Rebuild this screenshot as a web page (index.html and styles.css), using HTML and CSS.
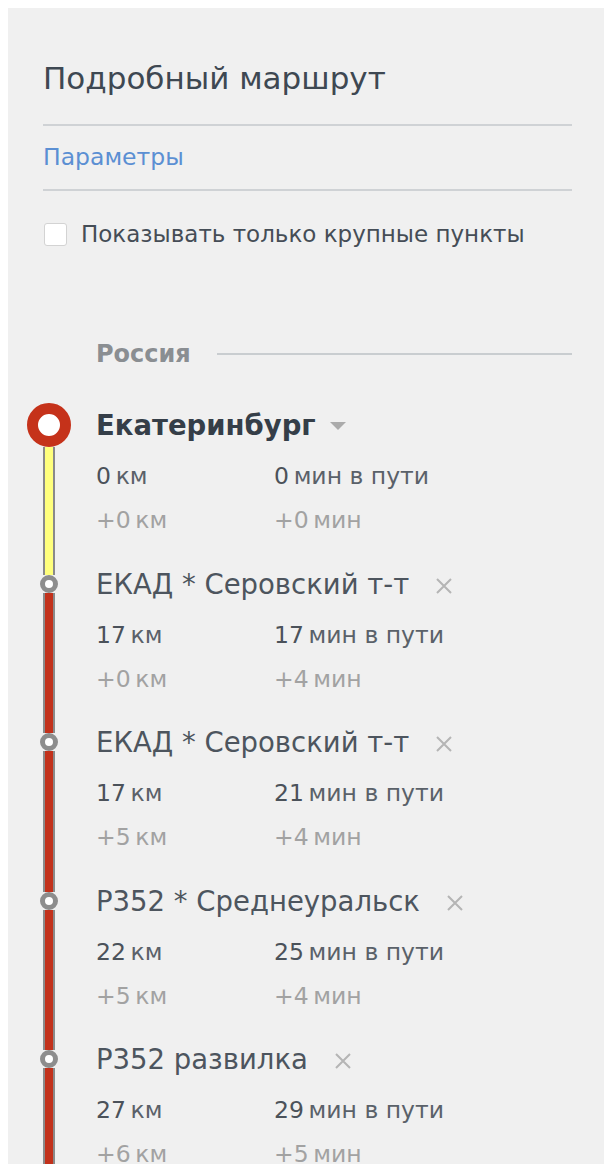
FILE: index.html
```html
<!DOCTYPE html>
<html lang="ru">
<head>
<meta charset="utf-8">
<title>Подробный маршрут</title>
<link rel="stylesheet" href="styles.css">
</head>
<body>
<main class="panel">
  <h1 class="panel-title">Подробный маршрут</h1>
  <div class="params"><a class="params-link" href="#">Параметры</a></div>
  <label class="option">
    <input type="checkbox" class="option-box">
    <span class="option-text">Показывать только крупные пункты</span>
  </label>

  <section class="route">
    <div class="country">
      <span class="country-name">Россия</span>
      <span class="country-rule"></span>
    </div>

    <ol class="stops">
      <li class="stop">
        <div class="rail">
          <span class="dot dot--start"></span>
          <span class="seg seg--yellow"></span>
        </div>
        <div class="stop-body">
          <div class="stop-head">
            <span class="stop-name stop-name--city">Екатеринбург</span>
            <span class="caret"></span>
          </div>
          <div class="stat-row">
            <span><span class="num">0</span>&thinsp;км</span>
            <span><span class="num">0</span>&thinsp;мин в пути</span>
          </div>
          <div class="stat-row stat-row--delta">
            <span>+0&thinsp;км</span>
            <span>+0&thinsp;мин</span>
          </div>
        </div>
      </li>

      <li class="stop">
        <div class="rail">
          <span class="stub seg--yellow"></span>
          <span class="dot"></span>
          <span class="seg seg--red"></span>
        </div>
        <div class="stop-body">
          <div class="stop-head">
            <span class="stop-name">ЕКАД * Серовский т-т</span>
            <button class="remove" type="button" aria-label="Удалить">
              <svg viewBox="0 0 20 20" width="20" height="20"><path d="M3 3 L17 17 M17 3 L3 17"/></svg>
            </button>
          </div>
          <div class="stat-row">
            <span><span class="num">17</span>&thinsp;км</span>
            <span><span class="num">17</span>&thinsp;мин в пути</span>
          </div>
          <div class="stat-row stat-row--delta">
            <span>+0&thinsp;км</span>
            <span>+4&thinsp;мин</span>
          </div>
        </div>
      </li>

      <li class="stop">
        <div class="rail">
          <span class="stub seg--red"></span>
          <span class="dot"></span>
          <span class="seg seg--red"></span>
        </div>
        <div class="stop-body">
          <div class="stop-head">
            <span class="stop-name">ЕКАД * Серовский т-т</span>
            <button class="remove" type="button" aria-label="Удалить">
              <svg viewBox="0 0 20 20" width="20" height="20"><path d="M3 3 L17 17 M17 3 L3 17"/></svg>
            </button>
          </div>
          <div class="stat-row">
            <span><span class="num">17</span>&thinsp;км</span>
            <span><span class="num">21</span>&thinsp;мин в пути</span>
          </div>
          <div class="stat-row stat-row--delta">
            <span>+5&thinsp;км</span>
            <span>+4&thinsp;мин</span>
          </div>
        </div>
      </li>

      <li class="stop">
        <div class="rail">
          <span class="stub seg--red"></span>
          <span class="dot"></span>
          <span class="seg seg--red"></span>
        </div>
        <div class="stop-body">
          <div class="stop-head">
            <span class="stop-name">Р352 * Среднеуральск</span>
            <button class="remove" type="button" aria-label="Удалить">
              <svg viewBox="0 0 20 20" width="20" height="20"><path d="M3 3 L17 17 M17 3 L3 17"/></svg>
            </button>
          </div>
          <div class="stat-row">
            <span><span class="num">22</span>&thinsp;км</span>
            <span><span class="num">25</span>&thinsp;мин в пути</span>
          </div>
          <div class="stat-row stat-row--delta">
            <span>+5&thinsp;км</span>
            <span>+4&thinsp;мин</span>
          </div>
        </div>
      </li>

      <li class="stop">
        <div class="rail">
          <span class="stub seg--red"></span>
          <span class="dot"></span>
          <span class="seg seg--red"></span>
        </div>
        <div class="stop-body">
          <div class="stop-head">
            <span class="stop-name">Р352 развилка</span>
            <button class="remove" type="button" aria-label="Удалить">
              <svg viewBox="0 0 20 20" width="20" height="20"><path d="M3 3 L17 17 M17 3 L3 17"/></svg>
            </button>
          </div>
          <div class="stat-row">
            <span><span class="num">27</span>&thinsp;км</span>
            <span><span class="num">29</span>&thinsp;мин в пути</span>
          </div>
          <div class="stat-row stat-row--delta">
            <span>+6&thinsp;км</span>
            <span>+5&thinsp;мин</span>
          </div>
        </div>
      </li>
    </ol>
  </section>
</main>
</body>
</html>
```

FILE: styles.css
```css
html,
body {
  margin: 0;
}

html {
  background: #ffffff;
  overflow: hidden;
}

body {
  padding: 8px 0 0 8px;
  font-family: "DejaVu Sans", Verdana, sans-serif;
}

/* Side panel */
.panel {
  box-sizing: border-box;
  min-height: 1156px;
  padding: 50px 32px 0 35px;
  background: #f0f0f0;
}

.panel-title {
  margin: 0;
  padding-bottom: 26px;
  border-bottom: 2px solid #cfd2d5;
  font-size: 31px;
  font-weight: normal;
  line-height: 40px;
  color: #3e4852;
}

.params {
  padding: 16px 0 17px;
  border-bottom: 2px solid #cfd2d5;
  font-size: 23.5px;
  line-height: 30px;
}

.params-link {
  color: #5b8fd3;
  text-decoration: none;
}

/* "Only major points" switch */
.option {
  display: flex;
  align-items: center;
  gap: 14px;
  height: 30px;
  margin-top: 28px;
  font-size: 23px;
  line-height: 30px;
  color: #454d56;
}

.option-box {
  appearance: none;
  box-sizing: border-box;
  width: 23px;
  height: 23px;
  margin: 0 0 0 1px;
  border: 1px solid #d3d3d3;
  border-radius: 3px;
  background: #ffffff;
}

/* Route timeline */
.route {
  margin-top: 90px;
}

.country {
  display: flex;
  align-items: center;
  gap: 26px;
  padding-left: 53px;
  line-height: 30px;
}

.country-name {
  font-size: 24px;
  font-weight: bold;
  color: #8a8e92;
}

.country-rule {
  flex: 1;
  height: 2px;
  background: #c9cdd0;
}

.stops {
  margin: 36px 0 0 -20px;
  padding: 0;
  list-style: none;
}

.stop {
  display: grid;
  grid-template-columns: 52px 1fr;
  column-gap: 21px;
}

.rail {
  display: flex;
  flex-direction: column;
  align-items: center;
}

.stub,
.seg {
  width: 8px;
  border-left: 2px solid #8a8a8a;
  border-right: 2px solid #8a8a8a;
}

.stub {
  height: 11px;
  flex: none;
}

.seg {
  flex: 1;
}

.seg--yellow {
  background: #ffff7c;
}

.seg--red {
  background: #c2311b;
}

.dot {
  box-sizing: border-box;
  flex: none;
  width: 18px;
  height: 18px;
  border: 5px solid #8d8d8d;
  border-radius: 50%;
  background: #ffffff;
}

.dot.dot--start {
  width: 44px;
  height: 44px;
  margin-top: -2px;
  border: 11px solid #c5321a;
}

.stop-body {
  padding-bottom: 21.5px;
}

.stop-head {
  display: flex;
  align-items: center;
  height: 40px;
}

.stop-name {
  font-size: 27.5px;
  color: #4d555e;
  white-space: nowrap;
}

.stop-name--city {
  font-weight: bold;
  color: #353e48;
}

.caret {
  width: 0;
  height: 0;
  margin: 2px 0 0 14px;
  border-top: 8px solid #ababab;
  border-left: 8px solid transparent;
  border-right: 8px solid transparent;
}

.remove {
  display: flex;
  margin: 4px 0 0 25px;
  padding: 0;
  border: 0;
  background: none;
}

.remove svg path {
  fill: none;
  stroke: #b5b5b5;
  stroke-width: 2;
}

.stat-row {
  display: grid;
  grid-template-columns: 178px auto;
  font-size: 23.5px;
  line-height: 44px;
  color: #5a6169;
  white-space: nowrap;
}

.stop-head + .stat-row {
  margin-top: 9px;
}

.num {
  color: #4b525a;
}

.stat-row--delta,
.stat-row--delta .num {
  color: #a2a2a2;
}
```
